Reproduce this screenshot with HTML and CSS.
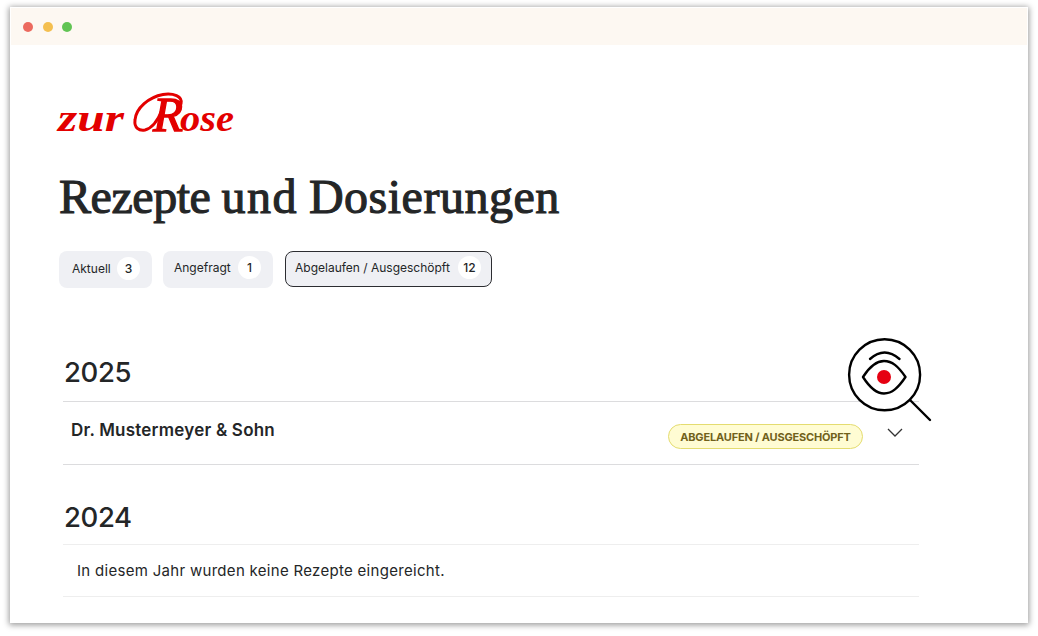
FILE: index.html
```html
<!DOCTYPE html>
<html lang="de">
<head>
<meta charset="utf-8">
<title>Rezepte und Dosierungen</title>
<link rel="stylesheet" href="styles.css">
</head>
<body>
<div class="window">
  <header class="titlebar"><i class="dot red"></i><i class="dot yellow"></i><i class="dot green"></i></header>
  <main class="content">
    <svg class="logo" width="190" height="66" viewBox="50 76 190 66" role="img" aria-label="zur Rose">
      <text class="logo-text" x="58" y="131" textLength="66" lengthAdjust="spacingAndGlyphs">zur</text>
      <text class="logo-text cap" x="153" y="131" textLength="30" lengthAdjust="spacingAndGlyphs">R</text>
      <text class="logo-text" x="180" y="131" textLength="54" lengthAdjust="spacingAndGlyphs">ose</text>
      <path class="swash" d="M181 104C183 96 173 93 163 94.500C149 97 136 108 135 120C134 128 139 131 145 130C153 128 158 120 162 110"/>
    </svg>
    <h1 class="title"><span class="w1">Rezepte</span> <span class="w2">und</span> <span class="w3">Dosierungen</span></h1>
    <nav class="tabs">
      <button class="tab current"><span class="label">Aktuell</span><span class="count">3</span></button>
      <button class="tab requested"><span class="label">Angefragt</span><span class="count">1</span></button>
      <button class="tab expired"><span class="label">Abgelaufen / Ausgeschöpft</span><span class="count">12</span></button>
    </nav>
    <section class="year">
      <h2 class="year-title">2025</h2>
      <div class="row">
        <strong class="doctor">Dr. Mustermeyer &amp; Sohn</strong>
        <span class="badge"><span>ABGELAUFEN / AUSGESCHÖPFT</span></span>
        <svg class="chevron" width="16" height="10" viewBox="0 0 16 10"><path d="M1 1L8 8L15 1"/></svg>
      </div>
    </section>
    <section class="year previous">
      <h2 class="year-title">2024</h2>
      <div class="row empty"><span class="message">In diesem Jahr wurden keine Rezepte eingereicht.</span></div>
    </section>
  </main>
  <svg class="lens" width="90" height="90" viewBox="845 335 90 90">
    <circle cx="884.6" cy="374.8" r="35.5" fill="#fff"/>
    <path d="M910 400L930 420M870 359Q884.5 346 899.500 359M863 377C870 366 876 361 884 361S898 366 905.500 377C898 388 892 393.500 884 393.500S870 388 863 377Z"/>
    <circle class="pupil" cx="884" cy="377" r="7"/>
  </svg>
</div>
</body>
</html>
```
FILE: styles.css
```css
* { box-sizing: border-box; }
body { margin: 0; padding: 7px 10px; height: 636px; overflow: hidden; background: #fff; color: #242627; font-family: Inter, sans-serif; }
.window { position: relative; width: 1018px; height: 616px; background: #fff; border: 1px solid #fff; box-shadow: 0 1px 6px 1px rgba(0,0,0,.4); }
.titlebar { display: flex; gap: 9.500px; height: 37px; padding: 14px 0 0 12px; background: #fdf8f2; }
.dot { width: 10px; height: 10px; border-radius: 50%; }
.red { background: #ec6a5f; }
.yellow { background: #f4bf50; }
.green { background: #61c454; }
.content { padding: 31px 108px 0 48px; }
.logo { display: block; margin-left: -9px; }
.logo-text { font: italic 700 38px "Liberation Serif", serif; fill: #e30000; }
.logo-text.cap { font-size: 49px; font-weight: 400; stroke: #e30000; stroke-width: 1.300px; }
.swash { fill: none; stroke: #e30000; stroke-width: 3px; stroke-linecap: round; }
.title { height: 56px; margin: 27px 0 0; font: 400 48px/56px "Liberation Serif", serif; -webkit-text-stroke: 1.100px #242627; white-space: nowrap; }
.w1 { letter-spacing: -.45px; }
.w2 { letter-spacing: 1.500px; margin-left: -1px; }
.w3 { letter-spacing: .5px; margin-left: -1px; }
.tabs { display: flex; align-items: center; height: 38px; margin-top: 25px; }
.tab { display: flex; align-items: center; justify-content: space-between; height: 37px; border: 0; border-radius: 8px; background: #eff0f4; color: #242627; font: 12px Inter, sans-serif; white-space: nowrap; }
.current { width: 93px; padding: 0 12px 2px 13px; }
.requested { width: 110px; margin-left: 11px; padding: 0 12px 3px 11px; }
.expired { width: 207px; height: 36px; margin-left: 12px; padding: 0 10px 3px 9px; border: 1.500px solid #2c2d31; }
.count { display: grid; place-items: center; width: 23px; height: 23px; border-radius: 50%; background: #fff; font-weight: 500; }
.year { margin-left: 4px; }
.year-title { height: 58px; margin: 55px 0 0 1px; font-weight: 500; font-size: 27.500px; line-height: 59px; letter-spacing: -.4px; }
.row { display: flex; align-items: center; height: 64px; border-top: 1px solid #dcdcde; border-bottom: 1px solid #dcdcde; }
.doctor { flex: 1; padding: 0 0 6px 8px; font-size: 17px; font-weight: 600; letter-spacing: .22px; }
.badge { display: grid; place-items: center; width: 195px; height: 25px; margin-top: 7px; border: 1px solid #e4dc70; border-radius: 13px; background: #fffcd3; color: #71611b; font-size: 11px; font-weight: 700; letter-spacing: -.17px; white-space: nowrap; }
.chevron { margin: 0 16px 0 24px; fill: none; stroke: #333; stroke-width: 1.300px; }
.previous .year-title { height: 54px; margin-top: 25px; line-height: 55px; }
.empty { height: 53px; border-color: #eee; }
.message { padding-left: 14px; font-size: 15px; letter-spacing: .3px; }
.lens { position: absolute; left: 834px; top: 327px; fill: none; stroke: #000; stroke-width: 2.400px; stroke-linecap: round; stroke-linejoin: round; }
.pupil { fill: #e60012; stroke: none; }
```
